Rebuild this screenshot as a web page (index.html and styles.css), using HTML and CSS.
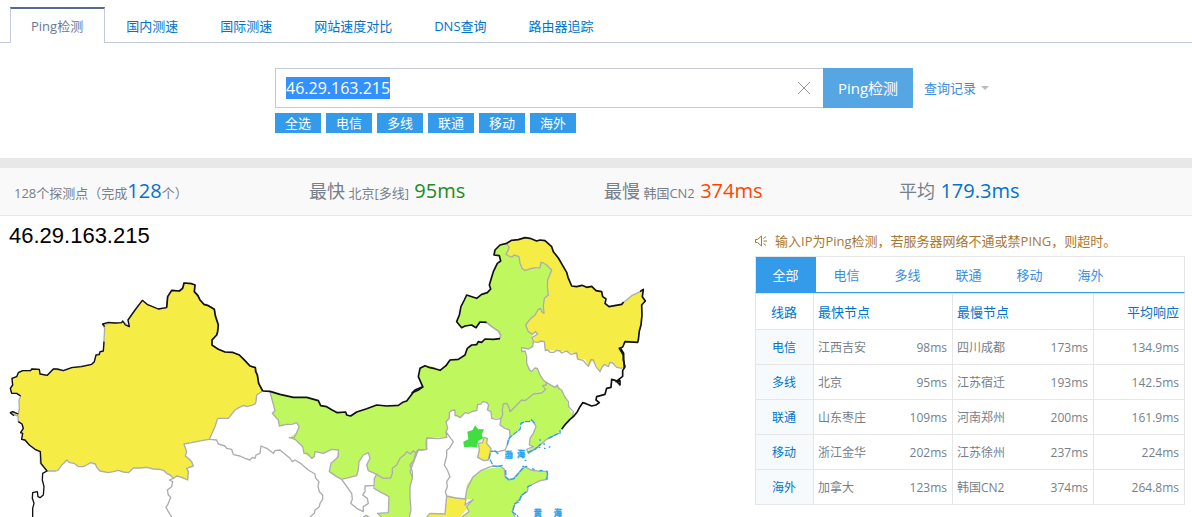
FILE: index.html
```html
<!DOCTYPE html>
<html lang="zh-CN">
<head>
<meta charset="utf-8">
<title>Ping检测</title>
<link rel="stylesheet" href="styles.css">
</head>
<body>
<nav class="tabs">
  <a class="tab tab-active" href="#ping">Ping检测</a>
  <a class="tab" href="#cn">国内测速</a>
  <a class="tab" href="#world">国际测速</a>
  <a class="tab" href="#compare">网站速度对比</a>
  <a class="tab" href="#dns">DNS查询</a>
  <a class="tab" href="#trace">路由器追踪</a>
</nav>

<form class="search" onsubmit="return false">
  <div class="search-main">
    <div class="search-row">
      <div class="field">
        <input class="field-input" id="host" type="text" value="46.29.163.215" aria-label="IP" autofocus>
        <button class="field-clear" type="button" aria-label="清除">
          <svg width="12" height="12" viewBox="0 0 12 12"><path d="M0 0L12 12M12 0L0 12" stroke="#999" fill="none"/></svg>
        </button>
      </div>
      <button class="submit" type="submit">Ping检测</button>
    </div>
    <div class="filters">
      <button class="filter" type="button">全选</button>
      <button class="filter" type="button">电信</button>
      <button class="filter" type="button">多线</button>
      <button class="filter" type="button">联通</button>
      <button class="filter" type="button">移动</button>
      <button class="filter" type="button">海外</button>
    </div>
  </div>
  <a class="history" href="#history">查询记录<span class="caret"></span></a>
</form>

<section class="stats">
  <div class="stat">128个探测点（完成<b class="num blue">128</b>个）</div>
  <div class="stat"><span class="label">最快</span> 北京[多线] <b class="num spaced green">95ms</b></div>
  <div class="stat"><span class="label">最慢</span> 韩国CN2 <b class="num spaced red">374ms</b></div>
  <div class="stat"><span class="label">平均</span> <b class="num spaced blue">179.3ms</b></div>
</section>

<main class="result">
  <div class="map">
    <svg class="map-svg" viewBox="0 0 2265 903" role="img" aria-label="46.29.163.215">
      <text class="map-title" x="27" y="81">46.29.163.215</text>

      <g transform="translate(600 342)">
        <path class="lime" d="M210 186L240 193 280 202 320 202 355 212 362 227 380 230 412 248 437 246 440 255 452 258 470 246 530 225 595 226 620 213 640 187 670 170 655 140 660 115 672 106 700 110V325H680V358L655 360 645 385 630 425 637 445 630 470 630 505 632 540 628 561H545L532 550 565 548 567 500 525 475 523 445 530 433 505 422 500 405 510 385 505 368 490 375 477 395 472 435 425 448 410 440 388 425 393 400 410 385 415 360 395 358 370 370 345 365 343 380 335 385 312 370 308 350 285 328 268 323 290 308 297 290 290 278 260 283 238 288 235 270 217 250 225 242Z"/>
        <path class="lime" d="M490 561L498 556 508 561Z"/>
      </g>
      <g transform="translate(1230 27)">
        <path class="lime" d="M5 505L38 485 25 455 30 430 45 422 90 436 120 405 145 403 165 390 172 370 200 352 215 350 225 342 270 341 272 330 265 318 245 305 230 292 210 291 198 308 185 300 155 308 140 290 148 270 170 210 200 220 215 208 232 203 242 192 238 180 250 140 262 115 272 108 268 92 252 90 255 75 270 60 290 55 298 68 288 88 300 95 312 90 327 95 330 115 345 136 390 128 393 112 410 120 425 135 413 165 415 210 403 220 402 265 385 253 375 270 347 300 355 320 368 328 365 345 370 350 368 365 355 372 335 368 335 380 345 378 350 415 365 440 382 430 400 465 408 472 407 493 370 507 345 527 335 525 300 560 290 535 280 537 278 555 275 580 245 580 243 560 232 555 235 535 218 530 203 538 200 557 175 565 165 563 150 578 135 572 135 555 118 562 118 580 108 590 113 610 108 620 110 637 50 639 50 640 50 673 20 675 5 640Z"/>
        <path class="yellow" d="M290 55L345 38 380 48 405 47 425 65 460 125 485 183 545 184 575 203 585 235 597 245 635 238 650 225 665 212 700 193 697 215 706 228 695 240 693 300 683 352 645 350 628 370 640 390 643 430 637 430 620 425 605 412 595 420 583 418 570 440 550 405 535 425 525 403 500 400 495 385 450 378 405 375 403 350 370 350 365 345 383 322 368 328 355 320 347 300 375 270 385 253 402 265 403 220 415 210 413 165 425 135 410 120 393 112 390 128 345 136 330 115 327 95 312 90 300 95 288 88 298 68Z"/>
        <path class="province" d="M290 55L298 68 288 88 300 95 306 96 312 90 327 95 330 115 337 131 345 136 370 129 390 128 393 112 400 114 410 120 425 135 419 150 413 165 412 185 415 210 403 220 400 243 402 265 395 260 392 250 385 253 375 270 360 283 347 300 355 320 368 328 376 319 383 327 366 338 370 350 368 365 355 372 335 368 335 380 345 378 350 395 350 415 358 434 365 440 375 429 382 430 390 450 400 465 408 472M370 350L385 352 392 348 403 350 406 377 413 375 420 382 432 382 440 376 450 378 455 384 470 378 482 388 500 384 503 402 519 406 535 424 542 404 550 405 558 425 570 440 575 428 583 418 595 425 600 412 608 414 620 427 637 430"/>
        <path class="halo" d="M270 341L272 330 265 318 245 305 230 292"/>
        <path class="border" d="M5 505L15 495 38 485 25 455 30 430 45 422 60 428 75 431 90 436 108 422 120 405 145 403 165 390 172 370 185 360 200 359 205 350 215 352 225 342 250 343 270 341M230 292L210 291 198 308 185 300 165 303 155 308 140 290 148 270 153 245 163 225 170 210 188 216 200 220 215 208 232 203 242 192 238 180 244 160 250 140 262 115 272 108 268 92 252 90 255 75 270 60 290 55 305 46 325 44 345 38 360 40 380 48 390 45 405 47 425 65 430 80 445 99 460 125 470 142 474 157 485 183 500 185 516 181 530 187 545 184 558 197 575 200 578 215 588 222 585 235 597 245 635 238 641 231M690 200L700 193 697 215 706 228 695 240 696 270 693 300 688 318 685 345 683 352 645 350 638 366 628 370 640 390 643 430"/>
        <path class="province" d="M641 231L650 225 665 212 690 200"/>
      </g>

      <g transform="translate(1230 402)">
        <path class="lime" d="M407 118L370 132 345 152 335 150 300 185 290 160 280 162 278 180 270 225 300 240 300 262 325 240 330 225 345 215 370 213 378 230 360 265 358 285 370 290 350 305 355 310 385 290 410 268 440 252 453 240 480 208 490 200 480 180 470 150 455 120 445 108 435 112 408 96Z"/>
        <path class="lime" d="M242 355L212 362 188 382 170 405 167 447 190 448 170 470 175 485 155 501H315L308 485 315 460 332 445 335 435 352 425 355 408 370 402 390 392 410 390 412 364 390 365 360 358 345 350 325 370 310 386 295 388 285 380 283 358 270 352Z"/>
        <path class="yellow" d="M110 438L168 447 165 465 178 464 168 480 150 501H50L60 490 105 492Z"/>
        <path class="green-fill" d="M195 226L205 238 222 238 215 255 220 265 205 272 200 293 185 290 162 292 160 275 175 268 172 245 188 240Z"/>
        <path class="yellow edged" d="M222 262L232 265 230 280 243 295 240 310 235 330 222 332 203 322 208 300 205 280 218 278Z"/>
        <path class="province" d="M408 96L409 105 398 107 407 118 395 129 370 132 358 142 345 152 335 150 318 167 300 185 297 173 290 160 280 162 277 180 278 195 273 205 270 225 285 235 299 240 300 262M275 205L258 208 245 205 243 185 232 180 236 165 230 157 218 155 213 162 203 163 200 182 190 183 175 190 165 188 150 203 140 196 135 197 135 180 126 181 118 187 118 205 108 215 113 235 108 245 110 262 85 266 66 265 50 264 48 280 50 298 35 300 25 298 20 305 15 315 12 330 0 345 7 365 7 385 0 410 0 442 3 480 -2 501M108 245L122 265 130 275 118 295 110 301 110 318 103 345 112 360 120 380 110 395 112 410 106 425 110 438 137 444 168 447 165 465 190 448 170 470 177 485 155 501M50 501L60 490 105 492 110 438M166 445L170 420 188 382 212 362 242 350M408 96L420 104 435 112 442 105 445 115 455 120 464 140 475 155 476 170 490 185 487 203M300 262L290 290 285 300 265 305 243 303M370 213L378 230 370 250 360 265 358 285 370 290 350 298 355 310 385 290 410 268 440 252"/>
        <path class="province" d="M242 350L270 348 283 358 285 380 295 388 310 386 325 370 345 350 362 360 390 364 412 364 412 388 390 392 370 402 355 408 352 425 335 435 332 445 315 460 308 485 315 501"/>
        <path class="border" d="M455 238L466 223 480 208 490 200 502 185 510 170 518 158 528 161 545 168 558 165 568 158 558 150 560 140 585 133 590 115 603 112 605 88 618 92 630 105 630 92 618 95 638 79 638 62 645 50 640 30 641 10 632 -5"/>
        <path class="sea" d="M292 285L295 267 312 252 330 238 333 220 345 215 358 215 365 210 375 222M240 310L238 325 250 348 262 350 278 346M287 360L288 382 297 390 312 386 325 370 340 352M353 307L375 298 392 282M415 265L440 253 452 247M265 312L255 303 243 305M344 350L352 349M366 356L374 359M388 362L398 361M410 362L413 372 409 388M365 405L350 412M348 425L332 440 328 455 314 462 307 485 325 500M388 270h5M400 282h5M386 292h5M402 295h5M416 291h5M344 331h5M337 349h5M450 240v12"/>
        <text class="sea-name" x="284" y="323">渤</text>
        <text class="sea-name" x="321" y="321">海</text>
        <text class="sea-name" x="371" y="497">黄</text>
        <text class="sea-name" x="431" y="497">海</text>
      </g>

      <g transform="translate(0 162)">
        <path class="yellow edged" d="M141 603L121 580 121 545 105 538 88 525 75 510 65 508 68 490 62 488 70 475 66 462 55 455 54 438 32 430 38 425 55 432 58 415 57 390 62 378 50 370 35 370 31 355 38 345 36 325 50 320 55 308 68 302 92 302 95 297 118 298 120 312 142 316 160 297 190 302 215 293 275 283 283 275 288 255 310 243 314 175 308 162 365 158 368 153 388 170 384 150 427 91 443 104 475 117 500 113 503 80 515 61 538 63 550 50 552 39 575 41 585 45 583 65 600 90 612 103 625 107 643 118 648 140 655 165 650 195 636 210 636 225 660 240 675 246 697 247 718 255 750 288 766 293 772 315 776 340 788 363 770 375 768 395 765 402 755 406 740 410 732 406 718 412 705 420 685 445 653 445 645 470 628 508 605 512 575 518 552 522 560 545 556 558 565 565 575 575 580 588 560 595 565 605 563 630 545 622 530 618 520 625 512 616 500 610 492 602 480 598 460 597 440 592 418 594 400 594 385 608 370 606 355 601 340 605 325 608 300 603 290 592 286 582 272 578 260 585 250 590 235 590 222 580 209 578 200 570 193 578 185 585 175 600 168 603Z"/>
        <path class="border thin" d="M98 741L98 715 102 700 97 685 98 668 112 665 114 680 120 683 130 675 132 650 127 630 128 610 141 603 123 580 121 545 105 538 88 525 75 510 65 508 68 490 62 488 70 475 66 462 55 455M55 432L45 428 38 425 31 428 42 437M62 378L50 370 35 370 31 355 38 345 36 325 50 320 55 308 68 302 92 302 95 297 118 298 120 312 142 316 160 297 172 297 190 302 215 293 245 290 275 283 283 275 288 255 298 254 300 245 310 243 312 215M314 170L308 162 325 157 345 159 365 158 368 153 376 165 388 170 384 150 405 120 427 91 443 104 475 117 500 113"/>
        <path class="border" d="M500 113L503 80 515 61 538 63 548 55 552 39 575 41 585 45 583 65 594 77 600 90 612 103 625 107 643 118 646 138 655 165 653 185 650 195 636 210 636 225 655 238 675 246 697 247 718 255 735 272 750 288 766 293 767 305 772 315 776 340 788 363"/>
        <path class="province" d="M520 625L508 630 518 635 515 650 502 660 505 675 512 682 505 700 498 712 505 725 515 741"/>
      </g>

      <g transform="translate(600 342)">
        <path class="province" d="M28 328L50 330 55 342 75 348 80 355 95 358 100 374 120 378 135 385 150 390 158 382 165 385 168 375 180 370 183 348 200 355 220 370 225 362 240 360 255 373 270 385 277 395 285 390 303 401 325 420 345 432 347 445 357 455 354 468 358 485 368 495 368 508 360 520 358 530 345 540 343 550 330 561"/>
        <path class="province" d="M210 186L225 242 217 250 235 270 238 288 260 283 275 283 290 278 297 290 290 308 283 322 268 323 285 328 308 350 312 370 322 370 335 385 343 380 345 365 370 370 395 358 415 360 415 378 410 385 393 400 388 425 410 440 425 448 470 437 475 418 477 395 490 375 505 368 510 385 500 405 505 422 530 433 550 445 572 444 577 430 577 415 590 405 600 385 615 373 620 365 632 372 640 362 648 370 655 360 680 358V325H695M655 360L645 385 630 425 637 440M530 433L523 445 522 475 545 488 567 500 565 548 532 550 545 561M425 448L437 465 455 490 457 508 452 520 470 535 490 545 490 530 505 520 502 505 488 495 495 485 495 468 523 466M490 561L498 556 508 561"/>
        <path class="border" d="M188 183L210 184 240 193 280 202 320 202 355 212 362 227 380 230 395 239 412 248 437 246 440 255 452 258 470 246 500 236 530 225 560 228 595 226 608 217 620 213 640 187 655 180 670 170"/>
      </g>
    </svg>
  </div>

  <aside class="panel">
    <p class="notice">
      <svg class="horn" width="12" height="12" viewBox="0 0 12 12"><path d="M.5 4.5h2L6.500 1v10L2.500 7.500h-2zM8.500 3.500L11 1.500M8.500 6H12M8.500 8.500L11 10.500" fill="none" stroke="#a8772f"/></svg>
      输入IP为Ping检测，若服务器网络不通或禁PING，则超时。
    </p>
    <div class="lines">
      <button class="line line-active" type="button">全部</button>
      <button class="line" type="button">电信</button>
      <button class="line" type="button">多线</button>
      <button class="line" type="button">联通</button>
      <button class="line" type="button">移动</button>
      <button class="line" type="button">海外</button>
    </div>
    <table class="table">
      <colgroup><col class="c1"><col class="c2"><col class="c3"><col class="c4"></colgroup>
      <thead>
        <tr><th class="center">线路</th><th>最快节点</th><th>最慢节点</th><th class="right">平均响应</th></tr>
      </thead>
      <tbody>
        <tr><th>电信</th><td><div class="pair"><span>江西吉安</span><span>98ms</span></div></td><td><div class="pair"><span>四川成都</span><span>173ms</span></div></td><td class="right">134.9ms</td></tr>
        <tr><th>多线</th><td><div class="pair"><span>北京</span><span>95ms</span></div></td><td><div class="pair"><span>江苏宿迁</span><span>193ms</span></div></td><td class="right">142.5ms</td></tr>
        <tr><th>联通</th><td><div class="pair"><span>山东枣庄</span><span>109ms</span></div></td><td><div class="pair"><span>河南郑州</span><span>200ms</span></div></td><td class="right">161.9ms</td></tr>
        <tr><th>移动</th><td><div class="pair"><span>浙江金华</span><span>202ms</span></div></td><td><div class="pair"><span>江苏徐州</span><span>237ms</span></div></td><td class="right">224ms</td></tr>
        <tr><th>海外</th><td><div class="pair"><span>加拿大</span><span>123ms</span></div></td><td><div class="pair"><span>韩国CN2</span><span>374ms</span></div></td><td class="right">264.8ms</td></tr>
      </tbody>
    </table>
  </aside>
</main>
<script src="main.js"></script>
</body>
</html>
```
FILE: styles.css
```css
* { box-sizing: border-box; }
body {
  margin: 0;
  background: #fff;
  color: #767f8a;
  font: 13px/20px "Open Sans", "Noto Sans CJK SC", sans-serif;
}
a { text-decoration: none; }
button, input { margin: 0; padding: 0; border: 0; border-radius: 0; font: inherit; background: none; }

.tabs {
  display: flex;
  height: 43px;
  padding: 7px 10px 0;
  background: linear-gradient(#c3cbdb, #c3cbdb) 0 100% / 100% 1px no-repeat;
}
.tab { padding: 9px 21px 0; color: #0074cc; white-space: nowrap; }
.tab-active {
  padding: 7px 21px 0 20px;
  border: 1px solid #c3cbdb;
  border-top: 2px solid #566a8c;
  border-bottom: 0;
  background: #fff;
  color: #697a95;
}

.search {
  display: grid;
  grid-template-columns: 1fr 642px 1fr;
  padding: 25px 0;
}
.search-main { grid-column: 2; }
.search-row { display: flex; height: 40px; padding-right: 4px; }
.field {
  display: flex;
  flex: 1;
  align-items: center;
  border: 1px solid #c3cbdb;
  border-right: 0;
}
.field-input {
  flex: 1;
  min-width: 0;
  padding: 0 10px;
  font-size: 16px;
  line-height: 22px;
  color: #333;
  outline: 0;
}
.field-input::selection { background: #3390ff; color: #fff; }
.field-clear { width: 12px; height: 12px; margin-right: 13px; }
.field-clear svg { display: block; }
.submit { width: 90px; background: #56a6e3; color: #fff; font-size: 15px; }
.filters { display: flex; gap: 5px; margin-top: 5px; }
.filter { width: 46px; height: 20px; background: #339be9; color: #fff; line-height: 20px; }
.history { display: flex; align-items: center; gap: 5px; height: 40px; padding-left: 7px; color: #3c8de0; }
.caret { border: 4px solid transparent; border-top-color: #bbb; border-bottom: 0; }

.stats {
  display: grid;
  grid-template-columns: repeat(4, 1fr);
  height: 58px;
  padding: 0 6px;
  border-top: 10px solid #e8e8e8;
  border-bottom: 1px solid #e8e8e8;
  background: #f9f9f9;
}
.stat { padding-left: 8px; line-height: 46px; white-space: nowrap; }
.label { font-size: 18px; }
.num { font-size: 20px; font-weight: 400; }
.spaced { margin-left: 2px; }
.blue { color: #0074cc; }
.green { color: #228b22; }
.red { color: #ff4500; }

.result { display: flex; align-items: flex-start; padding-right: 7px; }
.map { flex: 1; min-width: 0; }
.map-svg { display: block; width: 100%; }
.map-title { font: 66px "Liberation Sans", sans-serif; fill: #000; }
.yellow { fill: #f5ec45; }
.lime { fill: #bff75f; }
.green-fill { fill: #41de41; }
.edged, .province { stroke: #adadad; stroke-width: 4; stroke-linejoin: round; }
.province, .border, .sea, .halo { fill: none; }
.halo { stroke: #adadad; stroke-width: 5; }
.border { stroke: #111; stroke-width: 5; stroke-linejoin: round; }
.thin { stroke-width: 4; }
.sea { stroke: #25a5f0; stroke-width: 4; stroke-dasharray: 16 3; }
.sea-name { font: 900 24px "Noto Sans CJK SC", sans-serif; fill: #25a5f0; stroke: #25a5f0; stroke-width: 1; }

.panel { width: 430px; }
.notice { display: flex; align-items: center; gap: 8px; height: 40px; margin: 0; padding-top: 10px; color: #a8772f; white-space: nowrap; }
.lines {
  display: flex;
  gap: 1px;
  height: 37px;
  border: 1px solid #e6e6e6;
  border-bottom-color: #339be9;
}
.line { width: 60px; padding-right: 1px; color: #3c8de0; }
.line-active { background: #339be9; color: #fff; }
.table { width: 100%; border-collapse: collapse; table-layout: fixed; font-size: 12px; }
.c1 { width: 58px; }
.c2 { width: 139px; }
.c3 { width: 141px; }
.table th, .table td { height: 35px; padding: 2px 5px 0 4px; border: 1px solid #e6e6e6; }
.table th { color: #0074cc; font-weight: 400; }
.table thead th { height: 36px; padding-top: 0; font-size: 13px; text-align: left; }
.table tbody th { background: #f6fafd; }
.table thead .center { text-align: center; }
.table .right { text-align: right; }
.pair { display: flex; justify-content: space-between; }
```
FILE: main.js
```js
const host = document.getElementById("host");
host.focus();
host.select();
```
